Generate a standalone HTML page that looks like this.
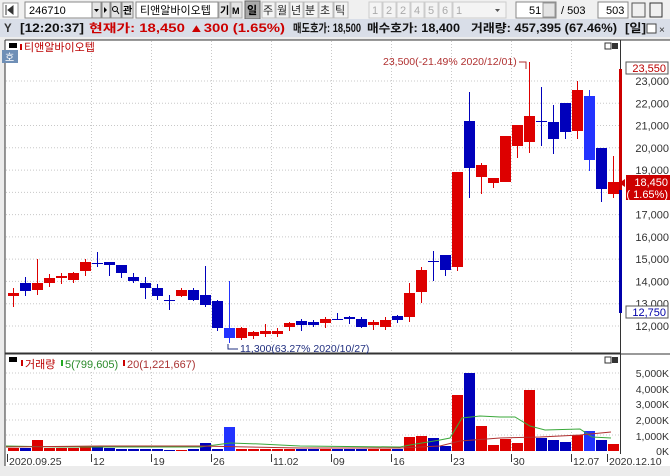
<!DOCTYPE html>
<html><head><meta charset="utf-8"><style>
body{margin:0;width:670px;height:471px;overflow:hidden;background:#ececec;font-family:"Liberation Sans","Noto Sans CJK KR",sans-serif;}
svg text{font-family:"Liberation Sans","Noto Sans CJK KR",sans-serif;}
</style></head><body>
<svg width="670" height="471" viewBox="0 0 670 471" xmlns="http://www.w3.org/2000/svg" id="s">
<rect x="0" y="0" width="670" height="471" fill="#ececec"/>
<rect x="0" y="0" width="670" height="19" fill="#f0f0f0"/>
<rect x="3" y="3" width="15" height="14" fill="#fff" stroke="#999"/>
<path d="M6 5v10M8 10l5-4v8z" stroke="#333" fill="#333"/>
<rect x="25" y="2" width="67" height="16" fill="#fff" stroke="#888"/>
<text x="29" y="14" font-size="11" fill="#000">246710</text>
<rect x="92" y="2" width="9" height="16" fill="#e4e4e4" stroke="#888"/><path d="M94 9h5l-2.5 3z" fill="#000"/>
<rect x="102" y="2" width="8" height="16" fill="#e4e4e4" stroke="#888"/><path d="M104 7v6l3-3z" fill="#000"/>
<rect x="111" y="2" width="10" height="16" fill="#e4e4e4" stroke="#888"/><circle cx="115" cy="9" r="2.5" fill="none" stroke="#000"/><path d="M117 11l2 3" stroke="#000"/>
<rect x="122" y="2" width="11" height="16" fill="#e4e4e4" stroke="#888"/><text x="123" y="14" font-size="10" font-weight="bold">관</text>
<rect x="136" y="2" width="82" height="16" fill="#fff" stroke="#888"/><text x="140" y="14" font-size="11">티앤알바이오텝</text>
<rect x="219" y="2" width="11" height="16" fill="#e4e4e4" stroke="#aaa"/><text x="220" y="14" font-size="10" font-weight="bold">기</text>
<rect x="231" y="2" width="11" height="16" fill="#e4e4e4" stroke="#aaa"/><text x="232" y="14" font-size="9" font-weight="bold">M</text>
<rect x="245" y="1" width="15" height="18" fill="#a8a8a8" stroke="#666"/><text x="247" y="14" font-size="11" font-weight="bold">일</text>
<g font-size="11" fill="#222">
<rect x="262" y="2" width="13" height="16" fill="#f4f4f4" stroke="#bbb"/><text x="263" y="14">주</text>
<rect x="276" y="2" width="13" height="16" fill="#f4f4f4" stroke="#bbb"/><text x="277" y="14">월</text>
<rect x="290" y="2" width="13" height="16" fill="#f4f4f4" stroke="#bbb"/><text x="291" y="14">년</text>
<rect x="304" y="2" width="14" height="16" fill="#f4f4f4" stroke="#bbb"/><text x="305" y="14">분</text>
<rect x="319" y="2" width="14" height="16" fill="#f4f4f4" stroke="#bbb"/><text x="320" y="14">초</text>
<rect x="334" y="2" width="14" height="16" fill="#f4f4f4" stroke="#bbb"/><text x="335" y="14">틱</text>
</g>
<g font-size="11" fill="#aaa">
<rect x="369" y="2" width="13" height="16" fill="#f4f4f4" stroke="#ccc"/><text x="372" y="14">1</text>
<rect x="383" y="2" width="13" height="16" fill="#f4f4f4" stroke="#ccc"/><text x="386" y="14">2</text>
<rect x="397" y="2" width="13" height="16" fill="#f4f4f4" stroke="#ccc"/><text x="400" y="14">2</text>
<rect x="411" y="2" width="13" height="16" fill="#f4f4f4" stroke="#ccc"/><text x="414" y="14">4</text>
<rect x="425" y="2" width="13" height="16" fill="#f4f4f4" stroke="#ccc"/><text x="428" y="14">5</text>
<rect x="439" y="2" width="13" height="16" fill="#f4f4f4" stroke="#ccc"/><text x="442" y="14">6</text>
<rect x="453" y="2" width="53" height="16" fill="#f4f4f4" stroke="#ccc"/><text x="456" y="14">1</text>
</g>
<path d="M495 9h5l-2.5 3z" fill="#555"/>
<rect x="516" y="2" width="40" height="16" fill="#fff" stroke="#888"/><text x="529" y="14" font-size="11">51</text>
<rect x="543" y="3" width="12" height="14" fill="#e4e4e4" stroke="#999"/>
<text x="561" y="14" font-size="11">/ 503</text>
<rect x="598" y="2" width="30" height="16" fill="#fff" stroke="#888"/><text x="606" y="14" font-size="11">503</text>
<rect x="632" y="3" width="13" height="14" fill="none" stroke="#555"/><rect x="650" y="3" width="12" height="14" fill="none" stroke="#333"/>
<rect x="0" y="19" width="670" height="18" fill="#d9dee8"/>
<g font-size="11.5" font-weight="bold">
<text x="4" y="32" fill="#333">Y</text>
<text x="20" y="32" fill="#111" textLength="64" lengthAdjust="spacingAndGlyphs">[12:20:37]</text>
<text x="89" y="32" fill="#cc0000" textLength="196" lengthAdjust="spacingAndGlyphs">현재가: 18,450 ▲300 (1.65%)</text>
<text x="293" y="32" fill="#111" textLength="68" lengthAdjust="spacingAndGlyphs">매도호가: 18,500</text>
<text x="367" y="32" fill="#111" textLength="93" lengthAdjust="spacingAndGlyphs">매수호가: 18,400</text>
<text x="471" y="32" fill="#111" textLength="146" lengthAdjust="spacingAndGlyphs">거래량: 457,395 (67.46%)</text>
<text x="625" y="32" fill="#111" textLength="21" lengthAdjust="spacingAndGlyphs">[일]</text>
</g>
<rect x="647" y="24" width="9" height="9" fill="#fff" stroke="#444"/><text x="659" y="33" font-size="10" fill="#333">×</text>
<rect x="5" y="40" width="665" height="428" fill="#fff"/>
<path d="M5 40H670M5 40V468" stroke="#333" fill="none"/>
<path d="M5 353H621M5 354H670" stroke="#333"/>
<line x1="620.5" y1="40" x2="620.5" y2="454" stroke="#333"/>
<rect x="0" y="466" width="670" height="5" fill="#ececec"/>
<g id="grid" stroke="#c8c8c8" stroke-dasharray="1,2"></g>
<rect x="9" y="43" width="8" height="5" fill="#000"/>
<rect x="2" y="50" width="16" height="13" fill="#6f8fb6"/><text x="5" y="61" font-size="10" fill="#fff">호</text>
<rect x="20" y="44" width="2" height="6" fill="#c00"/><text x="24" y="51" font-size="11" fill="#b00">티앤알바이오텝</text>
<rect x="605" y="43" width="6" height="6" fill="#fff" stroke="#333"/><rect x="612" y="43" width="6" height="6" fill="#333"/>
<rect x="605" y="357" width="6" height="6" fill="#fff" stroke="#333"/><rect x="612" y="357" width="6" height="6" fill="#333"/>
<g id="c"></g>
<text x="383" y="65" font-size="10.5" fill="#b03030">23,500(-21.49% 2020/12/01)</text>
<path d="M519 62h7v7" stroke="#b03030" fill="none"/>
<text x="240" y="352" font-size="10.5" fill="#223080">11,300(63.27% 2020/10/27)</text>
<path d="M238 349h-10v-5" stroke="#223080" fill="none"/>
<g font-size="11" fill="#333" text-anchor="end" id="ax"></g>
<rect x="619" y="69" width="3" height="121" fill="#cc0000"/>
<rect x="619" y="190" width="3" height="123" fill="#0000aa"/>
<rect x="626" y="62" width="42" height="12" fill="#fff" stroke="#555"/><text x="666" y="72" font-size="11" fill="#b00" text-anchor="end">23,550</text>
<rect x="626" y="306" width="42" height="12" fill="#fff" stroke="#555"/><text x="666" y="316" font-size="11" fill="#00a" text-anchor="end">12,750</text>
<rect x="626" y="175" width="44" height="25" fill="#cc0000"/><path d="M619 183l6-4v8z" fill="#cc0000"/>
<text x="668" y="186" font-size="11" fill="#fff" text-anchor="end">18,450</text>
<text x="668" y="198" font-size="11" fill="#fff" text-anchor="end">( 1.65%)</text>
<rect x="9" y="357" width="8" height="5" fill="#000"/>
<rect x="21" y="360" width="2" height="6" fill="#c00"/><text x="25" y="368" font-size="11" fill="#b00">거래량</text>
<rect x="61" y="360" width="2" height="6" fill="#2a2"/><text x="65" y="368" font-size="11" fill="#2a8a2a">5(799,605)</text>
<rect x="123" y="360" width="2" height="6" fill="#c00"/><text x="127" y="368" font-size="11" fill="#a33">20(1,221,667)</text>
<g font-size="10.5" fill="#333" text-anchor="end">
<text x="669" y="377">5,000K</text><text x="669" y="393">4,000K</text><text x="669" y="408">3,000K</text><text x="669" y="424">2,000K</text><text x="669" y="440">1,000K</text><text x="669" y="455">0K</text>
</g>
<g font-size="10.5" fill="#333" id="dx"></g>
</svg>
<script>
var NS="http://www.w3.org/2000/svg";
function el(p,t,a){var e=document.createElementNS(NS,t);for(var k in a)e.setAttribute(k,a[k]);p.appendChild(e);return e;}
var g=document.getElementById('grid');
var vx=[91,151,211,271,331,391,451,511,571];
vx.forEach(function(x){el(g,'line',{x1:x+.5,y1:41,x2:x+.5,y2:352});el(g,'line',{x1:x+.5,y1:372,x2:x+.5,y2:451});});
function py(p){return 81+(23000-p)*0.02227;}
var ax=document.getElementById('ax');
for(var p=12000;p<=23000;p+=1000){var y=py(p);el(g,'line',{x1:6,y1:y,x2:620,y2:y});var t=el(ax,'text',{x:669,y:y+4});t.textContent=(p/1000)+',000';}
[373,389,404,420,435].forEach(function(y){el(g,'line',{x1:6,y1:y,x2:620,y2:y});});
var R='#dd0000',B='#0000bb',L='#2233ff';
var c=[['r',293,296,288,307],['b',283,291,277,296],['r',283,290,259,295],['r',278,283,274,287],['r',276,278,273,284],['r',273,280,272,283],['r',262,271,259,276],['b',263,264,252,267],['b',262,265,262,276],['b',265,273,265,278],['b',277,281,273,283],['b',283,288,277,299],['b',288,296,284,300],['b',300,301,295,310],['r',290,296,288,297],['b',290,300,288,301],['b',295,305,266,307],['b',301,328,300,331],['l',328,338,281,343],['r',328,338,327,340],['r',332,336,331,339],['r',331,334,324,337],['r',331,334,328,337],['r',323,327,322,331],['b',321,325,319,331],['b',322,325,320,327],['r',319,323,317,328],['b',319,320,313,320],['b',317,319,316,324],['b',319,327,317,328],['r',322,325,320,330],['r',320,327,317,330],['b',316,320,315,323],['r',293,317,283,322],['r',270,292,267,303],['b',261,262,251,281],['b',255,270,255,276],['r',172,267,172,271],['b',121,168,92,198],['r',165,177,163,194],['r',178,183,178,188],['r',136,182,136,182],['r',125,146,125,158],['r',116,142,62,153],['b',121,122,87,146],['b',122,139,105,154],['b',103,132,103,139],['r',90,131,81,139],['l',96,160,90,171],['b',148,189,148,202],['r',182,194,156,198]];
var cg=document.getElementById('c');
var vol=[3,3,11,3,3,3,4,4,3,2,2,2,2,1,1,2,8,2,24,2,2,2,2,2,2,2,2,2,2,2,2,2,2,14,15,13,5,56,78,25,6,12,8,61,13,11,9,16,20,11,7];
c.forEach(function(d,i){var x=12*i+13;var col=d[0]=='r'?R:(d[0]=='l'?L:B);
el(cg,'line',{x1:x+.5,y1:d[3],x2:x+.5,y2:d[4],stroke:col});
el(cg,'rect',{x:x-5,y:d[1],width:11,height:Math.max(1,d[2]-d[1]),fill:col});
var h=vol[i];el(cg,'rect',{x:x-5,y:451-h,width:11,height:h,fill:col});});
var gr=[[6,446],[60,447],[200,447],[230,443],[260,444],[300,446],[400,447],[410,445],[440,440],[450,438],[462,418],[480,416],[500,417],[515,417],[530,426],[545,430],[580,429],[592,437],[611,438]];
var rd=[[6,447],[100,446],[200,446],[300,448],[400,448],[440,446],[460,441],[500,438],[540,437],[580,435],[611,432]];
function pl(a,col){el(cg,'polyline',{points:a.map(function(q){return q.join(',')}).join(' '),fill:'none',stroke:col,'stroke-width':1});}
pl(gr,'#3aa83a');pl(rd,'#b03030');
var dx=document.getElementById('dx');
[[7,'2020.09.25'],[91,'12'],[151,'19'],[211,'26'],[271,'11.02'],[331,'09'],[391,'16'],[451,'23'],[511,'30'],[571,'12.07'],[607,'2020.12.10']].forEach(function(d){
el(dx,'line',{x1:d[0]+.5,y1:454,x2:d[0]+.5,y2:462,stroke:'#333'});var t=el(dx,'text',{x:d[0]+2,y:465});t.textContent=d[1];});
</script>
</body></html>
